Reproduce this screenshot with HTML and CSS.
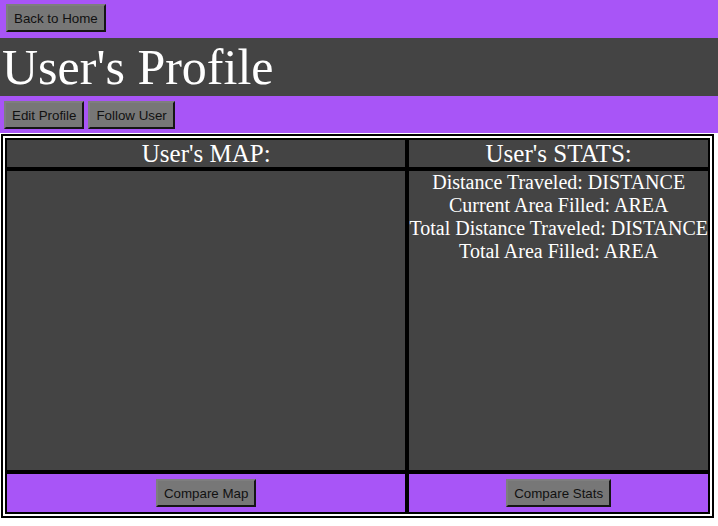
FILE: index.html
```html
<!DOCTYPE html>
<html>
<head>
<meta charset="utf-8">
<link rel="stylesheet" href="styles.css">
</head>
<body>
<div class="topbar">
  <button class="btn">Back to Home</button>
</div>
<div class="titlebar">
  <h1 class="title">User's Profile</h1>
</div>
<div class="actionbar">
  <button class="btn">Edit Profile</button>
  <button class="btn">Follow User</button>
</div>
<div class="frame">
  <div class="grid">
    <div class="cell head">User's MAP:</div>
    <div class="cell head">User's STATS:</div>
    <div class="cell body"></div>
    <div class="cell body stats">
      <div>Distance Traveled: DISTANCE</div>
      <div>Current Area Filled: AREA</div>
      <div>Total Distance Traveled: DISTANCE</div>
      <div>Total Area Filled: AREA</div>
    </div>
    <div class="cell foot"><button class="btn">Compare Map</button></div>
    <div class="cell foot"><button class="btn">Compare Stats</button></div>
  </div>
</div>
</body>
</html>
```

FILE: styles.css
```css
html, body {
  margin: 0;
  padding: 0;
  background: #ffffff;
}
body {
  font-family: "Liberation Serif", "Times New Roman", serif;
}
.btn {
  font-family: "Liberation Sans", Arial, sans-serif;
  font-size: 13.33px;
  color: #111111;
  background: #777777;
  height: 28px;
  padding: 1px 6px;
  border: 2px solid;
  border-color: #7e7e7e #151515 #151515 #7e7e7e;
  margin: 0;
}
.topbar {
  background: #a855f7;
  height: 38px;
  box-sizing: border-box;
  padding: 4px 6px;
}
.titlebar {
  background: #444444;
  height: 58px;
}
.title {
  margin: 0;
  padding-left: 2px;
  font-size: 50px;
  font-weight: normal;
  color: #ffffff;
  line-height: 58px;
}
.actionbar {
  background: #a855f7;
  height: 37px;
  box-sizing: border-box;
  padding: 5px 4px;
  display: flex;
  gap: 4px;
}
.frame {
  margin: 1px 4px 0 1px;
  border: 2px solid #000000;
  padding: 2px;
  background: #ffffff;
}
.grid {
  display: grid;
  grid-template-columns: 1fr auto;
}
.cell {
  border: 2px solid #000000;
  background: #444444;
  color: #ffffff;
  text-align: center;
}
.head {
  font-size: 25px;
  line-height: 27px;
}
.body {
  height: 299px;
}
.stats {
  font-size: 20px;
  line-height: 23px;
}
.foot {
  background: #a855f7;
  padding: 5px 0;
  display: flex;
  justify-content: center;
}
```
